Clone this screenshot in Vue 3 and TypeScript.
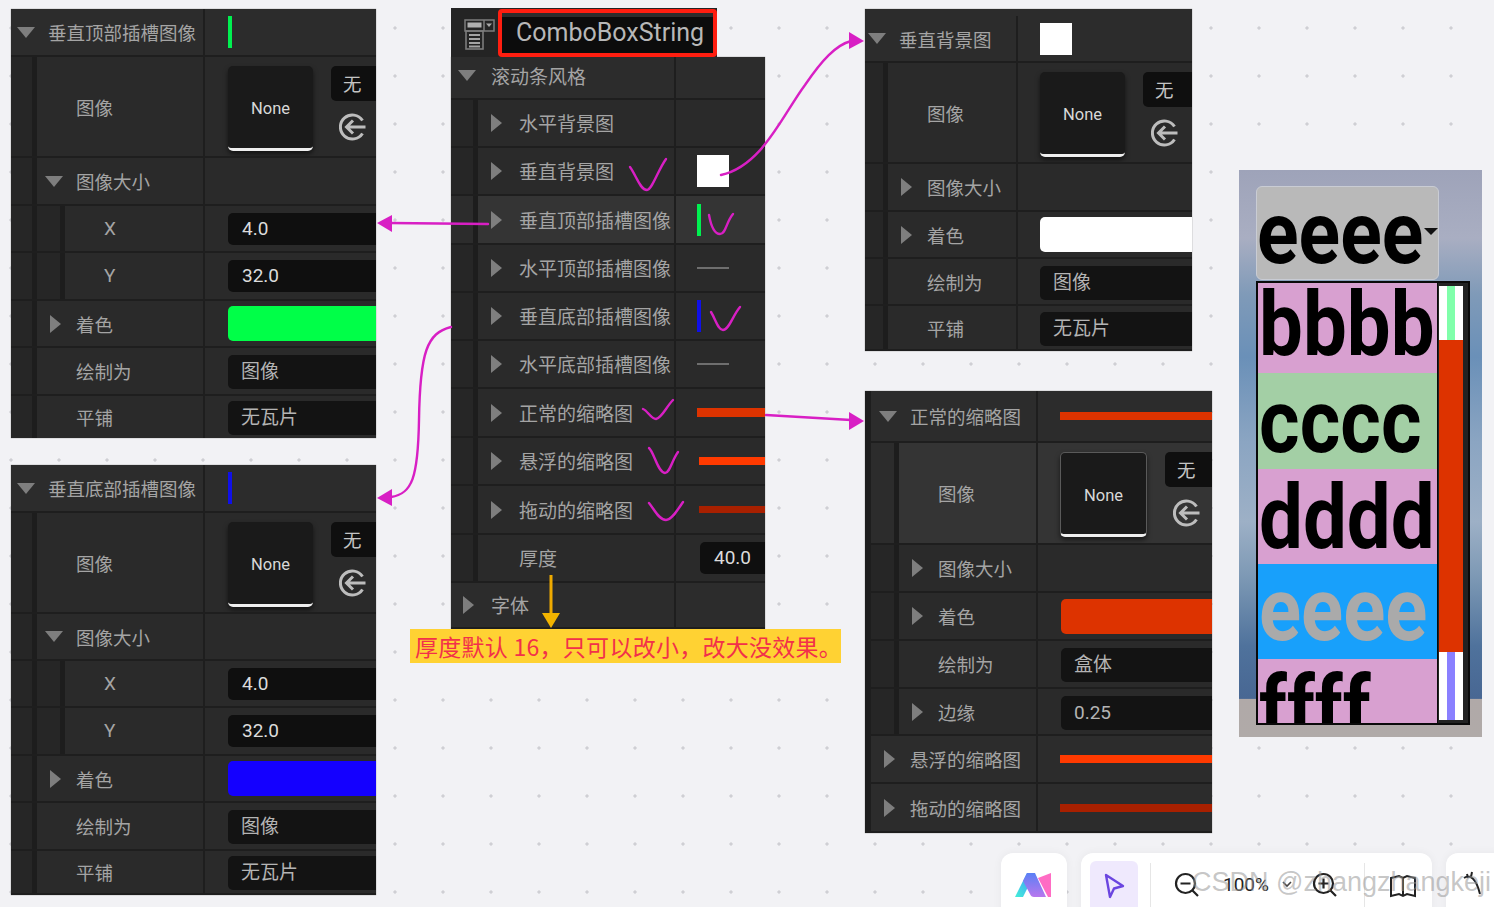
<script setup lang="ts">
type Val = { t: string; c?: string; h?: number; x?: number; s?: string }
type Row = { l: string; lv: number; a?: string; h: number; hov?: boolean; pt?: number; v?: Val }
type Panel = { id: string; x: number; y: number; w: number; hgt: number; lift: number; col: number; crop: number; strip: number; pad: number; cls: string; rows: Row[] }

const detail = (name: string, hs: number[], line: Val, open: boolean, pt = 0): Row[] => [
  { l: name, lv: 0, a: 'd', h: hs[0], pt, v: line },
  { l: '图像', lv: 1, h: hs[1], v: { t: 'thumb' } },
  { l: '图像大小', lv: 1, a: open ? 'd' : 'r', h: hs[2] },
  ...(open
    ? ([
        { l: 'X', lv: 2, h: hs[3], v: { t: 'num', s: '4.0' } },
        { l: 'Y', lv: 2, h: hs[4], v: { t: 'num', s: '32.0' } },
      ] as Row[])
    : []),
]

const panels: Panel[] = [
  {
    id: 'a', x: 11, y: 9, w: 365, hgt: 429, lift: 0, col: 196, crop: 2, strip: 0, pad: 23, cls: '',
    rows: [
      ...detail('垂直顶部插槽图像', [48, 101, 48, 47, 48], { t: 'vline', c: '#00f050' }, true),
      { l: '着色', lv: 1, a: 'r', h: 47, v: { t: 'tint', c: '#00ff48' } },
      { l: '绘制为', lv: 1, h: 48, v: { t: 'sel', s: '图像' } },
      { l: '平铺', lv: 1, h: 44, v: { t: 'sel', s: '无瓦片' } },
    ],
  },
  {
    id: 'b', x: 11, y: 465, w: 365, hgt: 430, lift: 0, col: 196, crop: 2, strip: 0, pad: 23, cls: '',
    rows: [
      ...detail('垂直底部插槽图像', [48, 101, 47, 47, 48], { t: 'vline', c: '#1010e8' }, true),
      { l: '着色', lv: 1, a: 'r', h: 47, v: { t: 'tint', c: '#1400ff' } },
      { l: '绘制为', lv: 1, h: 48, v: { t: 'sel', s: '图像' } },
      { l: '平铺', lv: 1, h: 44, v: { t: 'sel', s: '无瓦片' } },
    ],
  },
  {
    id: 'c', x: 451, y: 57, w: 314, hgt: 572, lift: 4, col: 226, crop: 1, strip: 0, pad: 21, cls: 'center',
    rows: [
      { l: '滚动条风格', lv: 0, a: 'd', h: 47 },
      { l: '水平背景图', lv: 1, a: 'r', h: 48 },
      { l: '垂直背景图', lv: 1, a: 'r', h: 48, v: { t: 'square' } },
      { l: '垂直顶部插槽图像', lv: 1, a: 'r', h: 49, hov: true, v: { t: 'vline', c: '#00f050' } },
      { l: '水平顶部插槽图像', lv: 1, a: 'r', h: 48, v: { t: 'hline' } },
      { l: '垂直底部插槽图像', lv: 1, a: 'r', h: 48, v: { t: 'vline', c: '#1010e8' } },
      { l: '水平底部插槽图像', lv: 1, a: 'r', h: 48, v: { t: 'hline' } },
      { l: '正常的缩略图', lv: 1, a: 'r', h: 49, v: { t: 'bar', c: '#dd3300', h: 9 } },
      { l: '悬浮的缩略图', lv: 1, a: 'r', h: 48, v: { t: 'bar', c: '#ff3a00', h: 8, x: 2 } },
      { l: '拖动的缩略图', lv: 1, a: 'r', h: 49, v: { t: 'bar', c: '#a82000', h: 7, x: 2 } },
      { l: '厚度', lv: 1, h: 48, v: { t: 'num', s: '40.0', x: 3 } },
      { l: '字体', lv: 0, a: 'r', h: 46 },
    ],
  },
  {
    id: 'd', x: 865, y: 9, w: 327, hgt: 342, lift: 0, col: 158, crop: 5, strip: 0, pad: 22, cls: '',
    rows: [
      ...detail('垂直背景图', [54, 101, 48, 0, 0], { t: 'square' }, false, 7),
      { l: '着色', lv: 1, a: 'r', h: 47, v: { t: 'tint', c: '#ffffff' } },
      { l: '绘制为', lv: 1, h: 47, v: { t: 'sel', s: '图像' } },
      { l: '平铺', lv: 1, h: 45, v: { t: 'sel', s: '无瓦片' } },
    ],
  },
  {
    id: 'e', x: 865, y: 391, w: 347, hgt: 442, lift: 0, col: 167, crop: 0, strip: 6, pad: 22, cls: 'right',
    rows: [
      { l: '正常的缩略图', lv: 0, a: 'd', h: 52, v: { t: 'bar', c: '#dd3300', h: 8 } },
      { l: '图像', lv: 1, h: 102, hov: true, v: { t: 'thumb' } },
      { l: '图像大小', lv: 1, a: 'r', h: 48 },
      { l: '着色', lv: 1, a: 'r', h: 48, v: { t: 'tint', c: '#dd3300', x: 1 } },
      { l: '绘制为', lv: 1, h: 48, v: { t: 'sel', s: '盒体', x: 1 } },
      { l: '边缘', lv: 1, a: 'r', h: 47, v: { t: 'sel', s: '0.25', x: 1 } },
      { l: '悬浮的缩略图', lv: 0, a: 'r', h: 48, v: { t: 'bar', c: '#ff3a00', h: 8 } },
      { l: '拖动的缩略图', lv: 0, a: 'r', h: 49, v: { t: 'bar', c: '#a82000', h: 8 } },
    ],
  },
]

const listItems = [
  { s: 'bbbb', c: 'pink first' },
  { s: 'cccc', c: 'green' },
  { s: 'dddd', c: 'pink mid' },
  { s: 'eeee', c: 'blue' },
  { s: 'ffff', c: 'pink tail' },
]

const checks = [
  'M630 167 C636 175 640 190 647 190 C652 190 658 170 666 159',
  'M709 215 C711 226 714 234 720 234 C726 234 726 222 733 214',
  'M711 312 C716 320 718 330 723 330 C729 330 733 315 740 307',
  'M643 409 C648 411 651 419 656 419 C662 418 666 407 673 400',
  'M649 448 C654 452 658 473 665 473 C670 473 672 460 678 452',
  'M649 503 C654 509 659 520 666 520 C672 520 678 509 683 502',
]
</script>

<template>
  <div class="canvas">
    <section
      v-for="p in panels"
      :key="p.id"
      class="panel"
      :class="p.cls"
      :style="{ left: p.x + 'px', top: p.y + 'px', width: p.w + 'px', height: p.hgt + 'px', borderLeftWidth: p.strip + 'px' }"
    >
      <div class="inner" :style="{ marginLeft: -p.crop + 'px', marginTop: -p.lift + 'px' }">
        <div
          v-for="(r, i) in p.rows"
          :key="i"
          class="row"
          :class="{ hov: r.hov, head: r.lv === 0 }"
          :style="{ height: r.h + 'px', paddingTop: (r.pt || 0) + 'px', gridTemplateColumns: p.col + 'px ' + (p.w - p.col - p.strip + p.crop) + 'px' }"
        >
          <div class="name">
            <span v-for="n in r.lv" :key="n" class="rail"></span>
            <span class="arrow-box">
              <span v-if="r.a === 'd'" class="tri-d"></span>
              <span v-else-if="r.a === 'r'" class="tri-r"></span>
            </span>
            <span class="label" :class="{ latin: r.l === 'X' || r.l === 'Y' }">{{ r.l }}</span>
          </div>
          <div class="value" :style="{ paddingLeft: p.pad + (r.v?.x || 0) + 'px' }">
            <template v-if="r.v">
              <span v-if="r.v.t === 'vline'" class="vline" :style="{ background: r.v.c }"></span>
              <span v-else-if="r.v.t === 'hline'" class="hline"></span>
              <span v-else-if="r.v.t === 'square'" class="square"></span>
              <span v-else-if="r.v.t === 'bar'" class="bar" :style="{ background: r.v.c, height: r.v.h + 'px' }"></span>
              <span v-else-if="r.v.t === 'tint'" class="tint" :style="{ background: r.v.c }"></span>
              <span v-else-if="r.v.t === 'num'" class="num">{{ r.v.s }}</span>
              <span v-else-if="r.v.t === 'sel'" class="sel">{{ r.v.s }}</span>
              <div v-else-if="r.v.t === 'thumb'" class="asset">
                <div class="thumb">None</div>
                <div class="side">
                  <span class="none-btn">无</span>
                  <svg class="reset" width="28" height="28" viewBox="0 0 28 28" fill="none" stroke="#bdbdbd" stroke-width="3">
                    <path d="M23.5 7.5 A12 12 0 1 0 23.5 20.5" />
                    <path d="M26.5 14 H8 M14 7.5 L7.5 14 L14 20.5" />
                  </svg>
                </div>
              </div>
            </template>
          </div>
        </div>
      </div>
    </section>

    <header class="title-bar">
      <svg class="combo-icon" width="32" height="32" viewBox="0 0 32 32" fill="none">
        <rect x="1" y="1" width="29" height="11" stroke="#7c7c7c" stroke-width="1.5" />
        <rect x="3.5" y="3.5" width="14" height="5" fill="#b0b0b0" />
        <path d="M20 1 V12" stroke="#7c7c7c" stroke-width="1.5" />
        <path d="M22 4.5 H28 L25 8 Z" fill="#a8a8a8" />
        <rect x="2" y="12" width="17" height="18" stroke="#7c7c7c" stroke-width="1.6" />
        <path d="M5 16 H16 M5 20 H16 M5 24 H16 M5 27.5 H16" stroke="#a4a4a4" stroke-width="2" />
      </svg>
      <div class="title-box"><span>ComboBoxString</span></div>
    </header>

    <div class="note">厚度默认 16，只可以改小，改大没效果。</div>

    <aside class="preview">
      <div class="combo">
        <span class="big">eeee</span>
        <span class="combo-caret"></span>
      </div>
      <div class="list">
        <div class="items">
          <div v-for="it in listItems" :key="it.s" class="item" :class="it.c">
            <span class="big">{{ it.s }}</span>
          </div>
        </div>
        <div class="scroll">
          <div class="sb-end top"><i></i></div>
          <div class="sb-thumb"></div>
          <div class="sb-end bottom"><i></i></div>
        </div>
      </div>
    </aside>

    <svg class="marks" width="1494" height="907" viewBox="0 0 1494 907" fill="none">
      <g stroke="#d81fc4" stroke-width="2.4" stroke-linecap="round">
        <path d="M488 224 L390 223" />
        <path d="M451 327 C427 333 420 352 419 420 C418 478 412 494 391 497" />
        <path d="M721 175 C762 166 782 116 805 85 C822 60 836 45 851 41" />
        <path d="M766 415 L851 420" />
        <path v-for="(c, i) in checks" :key="i" :d="c" />
      </g>
      <g fill="#d81fc4">
        <path d="M377 223 L392 215 V232 Z" />
        <path d="M377 498 L392 489 V506 Z" />
        <path d="M864 41 L849 32 V49 Z" />
        <path d="M864 421 L849 412 V430 Z" />
      </g>
      <path d="M551 575 V613" stroke="#eeaa00" stroke-width="3" />
      <path d="M551 628 L542 613 H560 Z" fill="#f2b400" />
    </svg>

    <footer class="dock">
      <div class="card logo-card">
        <svg width="38" height="28" viewBox="0 0 38 28">
          <defs>
            <linearGradient id="lg1" x1="0" y1="1" x2="1" y2="0">
              <stop offset="0" stop-color="#45f0d8" />
              <stop offset="1" stop-color="#3a8cff" />
            </linearGradient>
            <linearGradient id="lg2" x1="0" y1="0" x2="0" y2="1">
              <stop offset="0" stop-color="#5a80f5" />
              <stop offset="1" stop-color="#b877ee" />
            </linearGradient>
          </defs>
          <path d="M0 25 L12 1 H20 L8 25 Z" fill="url(#lg1)" />
          <path d="M12 1 H20 L31 25 H19 Q16 25 15 22 L8 9 Z" fill="url(#lg2)" />
          <path d="M23 6 L36 1 V25 H33 Z" fill="#ff6cc4" />
        </svg>
      </div>
      <div class="card tools">
        <div class="cursor">
          <svg width="24" height="26" viewBox="0 0 24 26" fill="none" stroke="#6b46e0" stroke-width="2.4" stroke-linejoin="round">
            <path d="M4 2 L21 13 L12 15.5 L8 24 Z" />
          </svg>
        </div>
        <span class="sep"></span>
        <svg class="ico first" width="26" height="26" viewBox="0 0 26 26" fill="none" stroke="#222" stroke-width="2.2">
          <circle cx="11.5" cy="11.5" r="9.5" /><path d="M6.5 11.5 H16.5 M18.5 18.5 L24 24" />
        </svg>
        <span class="pct">100%</span>
        <svg class="chev" width="12" height="8" viewBox="0 0 12 8" fill="none" stroke="#444" stroke-width="1.6"><path d="M2 2 L6 6 L10 2" /></svg>
        <svg class="ico plus" width="26" height="26" viewBox="0 0 26 26" fill="none" stroke="#222" stroke-width="2.2">
          <circle cx="11.5" cy="11.5" r="9.5" /><path d="M6.5 11.5 H16.5 M11.5 6.5 V16.5 M18.5 18.5 L24 24" />
        </svg>
        <span class="sep two"></span>
        <svg class="ico map" width="28" height="24" viewBox="0 0 28 24" fill="none" stroke="#222" stroke-width="2">
          <path d="M2 4 L10 2 L14 4 L18 2 L26 4 V22 L18 20 L14 22 L10 20 L2 22 Z M14 4 V22" />
        </svg>
      </div>
      <div class="card last">
        <svg width="22" height="26" viewBox="0 0 22 26" fill="none" stroke="#222" stroke-width="2">
          <path d="M2 8 C8 4 14 8 18 24 M5 4 L6 8 M10 2 L9 7" />
        </svg>
      </div>
    </footer>
    <div class="watermark">CSDN @zhangzhangkeji</div>
  </div>
</template>

<style>
html,
body {
  margin: 0;
  overflow: hidden;
  background: #f2f2f5;
}
</style>

<style scoped>
.canvas {
  position: relative;
  width: 1494px;
  height: 907px;
  overflow: hidden;
  background-color: #f2f2f5;
  background-image: radial-gradient(circle at center, #cfcfd4 0 1.4px, transparent 1.8px);
  background-size: 48px 48px;
  background-position: -13px 4px;
  font-family: 'Noto Sans CJK SC', 'Noto Sans', sans-serif;
}
.panel {
  position: absolute;
  box-sizing: border-box;
  overflow: hidden;
  background: #282828;
  border-left: 0 solid #1e1e1e;
  box-shadow: 0 0 1px #777;
}
.inner {
  display: flex;
  flex-direction: column;
}
.row {
  display: grid;
  flex: none;
  box-sizing: border-box;
  background: #2a2a2a;
  border-bottom: 2px solid #1e1e1e;
}
.row.head {
  background: #2c2c2c;
}
.row.hov {
  background: #343434;
}
.name {
  display: flex;
  align-items: stretch;
  min-width: 0;
  border-right: 2px solid #1e1e1e;
}
.rail {
  flex: none;
  box-sizing: border-box;
  width: 28px;
  background: #262626;
  border-right: 5px solid #1d1d1d;
}
.row.hov .rail {
  background: #2c2c2c;
}
.arrow-box {
  flex: none;
  display: flex;
  align-items: center;
  justify-content: center;
  width: 18px;
  margin-left: 8px;
  margin-right: 13px;
}
.center .arrow-box {
  margin-right: 15px;
}
.tri-d {
  width: 0;
  height: 0;
  border-left: 9px solid transparent;
  border-right: 9px solid transparent;
  border-top: 11px solid #7e7e7e;
}
.tri-r {
  width: 0;
  height: 0;
  margin-left: 2px;
  border-top: 9px solid transparent;
  border-bottom: 9px solid transparent;
  border-left: 11px solid #7e7e7e;
}
.label {
  align-self: center;
  font-size: 18.5px;
  line-height: 24px;
  color: #a4a4a4;
  white-space: nowrap;
}
.center .label {
  font-size: 19px;
}
.label.latin {
  font-family: Roboto, sans-serif;
  font-size: 19px;
}
.value {
  display: flex;
  align-items: center;
  overflow: hidden;
  min-width: 0;
}
.vline {
  flex: none;
  width: 4px;
  height: 32px;
}
.hline {
  flex: none;
  width: 32px;
  height: 2px;
  background: #6e6e6e;
}
.square {
  flex: none;
  width: 32px;
  height: 32px;
  background: #fff;
}
.bar {
  flex: 1 0 auto;
}
.tint {
  flex: 1 0 auto;
  height: 35px;
  border-radius: 5px 0 0 5px;
}
.num,
.sel {
  flex: 1 0 auto;
  box-sizing: border-box;
  height: 32px;
  padding-left: 14px;
  background: #0f0f0f;
  border-radius: 5px 0 0 5px;
  color: #dcdcdc;
  font-family: Roboto, 'Noto Sans CJK SC', sans-serif;
  font-size: 19px;
  line-height: 32px;
}
.sel {
  height: 34px;
  margin-top: 2px;
  line-height: 34px;
  color: #b4b4b4;
  padding-left: 13px;
  background: #131313;
}
.asset {
  display: flex;
  align-items: flex-start;
  margin-top: 3px;
}
.thumb {
  box-sizing: border-box;
  flex: none;
  width: 85px;
  height: 85px;
  background: #1a1a1a;
  border-radius: 5px;
  border-bottom: 3px solid #eee;
  box-shadow: 0 3px 5px rgba(0, 0, 0, 0.55);
  color: #d8d8d8;
  font-family: Roboto, sans-serif;
  font-size: 16.5px;
  line-height: 86px;
  text-align: center;
}
.right .thumb {
  width: 87px;
  border: 1px solid #5a5a5a;
  border-bottom: 3px solid #eee;
}
.side {
  flex: none;
  display: flex;
  flex-direction: column;
  align-items: center;
  width: 60px;
  margin-left: 18px;
  gap: 12px;
}
.none-btn {
  align-self: stretch;
  height: 35px;
  border-radius: 5px 0 0 5px;
  background: #0f0f0f;
  color: #c4c4c4;
  font-size: 18.5px;
  line-height: 35px;
  padding-left: 12px;
}
.reset {
  align-self: flex-start;
  margin-left: 8px;
}
.title-bar {
  position: absolute;
  left: 451px;
  top: 8px;
  width: 266px;
  height: 49px;
  display: flex;
  align-items: center;
  background: #242424;
}
.combo-icon {
  flex: none;
  margin: 4px 0 0 13px;
}
.title-box {
  flex: none;
  box-sizing: border-box;
  width: 219px;
  height: 48px;
  margin-left: 2px;
  border: 4px solid #ff1e10;
  border-radius: 4px;
  background: #0c0c0c;
  box-shadow: inset 0 4px 0 #2c2c2c;
  padding-left: 14px;
  color: #b8b8b8;
  font-family: Roboto, sans-serif;
  font-size: 25px;
  line-height: 40px;
  white-space: nowrap;
}
.note {
  position: absolute;
  left: 410px;
  top: 629px;
  box-sizing: border-box;
  width: 431px;
  height: 34px;
  padding-left: 5px;
  background: #ffd233;
  color: #f2304a;
  font-size: 23px;
  letter-spacing: 0.27px;
  line-height: 34px;
  white-space: nowrap;
}
.preview {
  position: absolute;
  left: 1239px;
  top: 170px;
  box-sizing: border-box;
  width: 243px;
  height: 567px;
  padding: 16px 0 0 17px;
  background: linear-gradient(
    180deg,
    #9ea3b9 0%,
    #a9aec2 12%,
    #7f9ab8 22%,
    #6a90b8 33%,
    #8ba5c2 48%,
    #9db0c6 62%,
    #7c98b4 72%,
    #4f729c 84%,
    #486793 93.2%,
    #b0a9a8 93.3%,
    #b0aaa8 100%
  );
}
.combo {
  position: relative;
  box-sizing: border-box;
  width: 183px;
  height: 94px;
  background: #b9b9b9;
  border: 1px solid #c9ccd4;
  border-radius: 6px;
  overflow: hidden;
}
.combo .big {
  position: absolute;
  left: 0;
  top: 0;
  font-size: 77px;
  line-height: 92px;
}
.combo-caret {
  position: absolute;
  right: 0;
  top: 41px;
  width: 0;
  height: 0;
  border-left: 7px solid transparent;
  border-right: 7px solid transparent;
  border-top: 7px solid #111;
}
.big {
  display: block;
  font-family: Roboto, sans-serif;
  font-weight: 700;
  font-size: 78px;
  line-height: 84px;
  color: #000;
  transform: scaleY(1.14);
  transform-origin: 0 50%;
  white-space: nowrap;
}
.list {
  display: flex;
  box-sizing: border-box;
  width: 214px;
  height: 444px;
  margin-top: 1px;
  border: 2px solid #0a0a0a;
  background: #0a0a0a;
}
.items {
  flex: none;
  width: 179px;
  display: flex;
  flex-direction: column;
}
.item {
  flex: none;
  box-sizing: border-box;
  height: 95px;
  padding-left: 1px;
  overflow: hidden;
}
.item.first {
  height: 90px;
}
.item.green {
  height: 96px;
  padding-top: 7px;
}
.item.mid {
  padding-top: 7px;
}
.item.blue {
  padding-top: 4px;
}
.item.tail {
  height: 64px;
  padding-top: 8px;
}
.pink {
  background: #d8a0d0;
}
.green {
  background: #a3cfa5;
}
.blue {
  background: #18a0fb;
}
.blue .big {
  color: #aaa;
}
.scroll {
  flex: 1;
  box-sizing: border-box;
  margin-left: 1px;
  padding: 3px 5px 3px 1px;
  background: #222;
  display: flex;
  flex-direction: column;
}
.sb-end {
  flex: none;
  display: flex;
  justify-content: center;
  background: #fff;
}
.sb-end i {
  width: 8px;
  height: 100%;
}
.sb-end.top {
  height: 54px;
}
.sb-end.top i {
  background: #80ffaa;
}
.sb-end.bottom {
  height: 68px;
}
.sb-end.bottom i {
  background: #8a80ff;
}
.sb-thumb {
  flex: 1;
  background: #dd3300;
}
.marks {
  position: absolute;
  left: 0;
  top: 0;
  pointer-events: none;
}
.dock {
  position: absolute;
  left: 1001px;
  top: 853px;
  display: flex;
  gap: 14px;
  height: 70px;
}
.card {
  background: #fff;
  border-radius: 12px;
  box-shadow: 0 0 10px rgba(0, 0, 0, 0.05);
}
.logo-card {
  width: 66px;
  display: flex;
  justify-content: center;
  padding-top: 19px;
  box-sizing: border-box;
}
.tools {
  width: 351px;
  display: flex;
  align-items: flex-start;
  box-sizing: border-box;
  padding: 8px 0 0 9px;
}
.cursor {
  flex: none;
  width: 48px;
  height: 60px;
  border-radius: 6px;
  background: #efe9fd;
  display: flex;
  justify-content: center;
  padding-top: 12px;
  box-sizing: border-box;
}
.sep {
  flex: none;
  width: 1px;
  height: 46px;
  margin: 2px 0 0 12px;
  background: #e6e6e6;
}
.ico {
  flex: none;
}
.ico.first {
  margin: 11px 0 0 23px;
}
.pct {
  flex: none;
  margin: 12px 0 0 23px;
  font-family: Roboto, sans-serif;
  font-size: 19px;
  line-height: 24px;
  color: #222;
}
.chev {
  flex: none;
  margin: 19px 0 0 12px;
}
.ico.plus {
  margin: 11px 0 0 19px;
}
.sep.two {
  margin-left: 26px;
}
.ico.map {
  margin: 13px 0 0 24px;
}
.last {
  width: 60px;
  box-sizing: border-box;
  padding: 17px 0 0 16px;
}
.watermark {
  position: absolute;
  left: 1192px;
  top: 865px;
  font-family: 'Liberation Sans', sans-serif;
  font-size: 27px;
  line-height: 34px;
  color: rgba(150, 150, 150, 0.55);
  white-space: nowrap;
}
</style>
